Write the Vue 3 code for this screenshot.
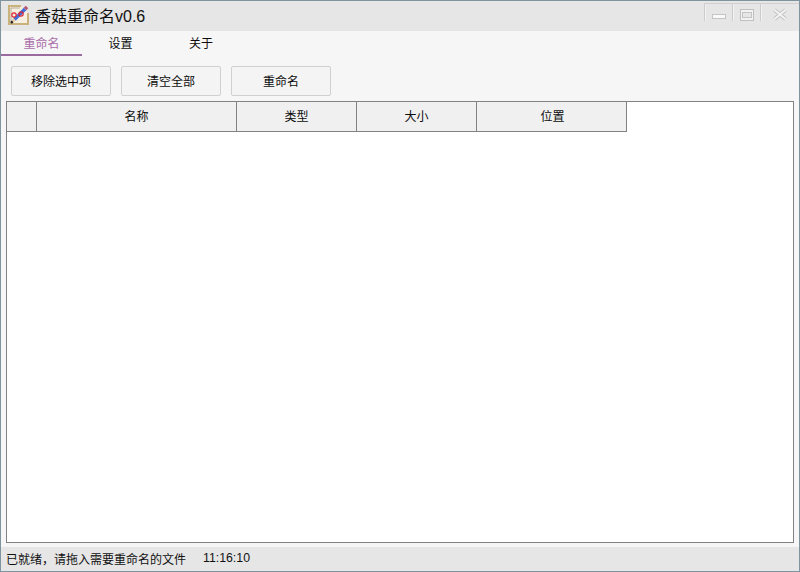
<script setup>
const tabs = [
  { label: '重命名', active: true },
  { label: '设置', active: false },
  { label: '关于', active: false }
]
const actions = ['移除选中项', '清空全部', '重命名']
const columns = [
  { label: '', cls: 'c0' },
  { label: '名称', cls: 'c1' },
  { label: '类型', cls: 'c2' },
  { label: '大小', cls: 'c3' },
  { label: '位置', cls: 'c4' }
]
</script>

<template>
  <div class="win">
    <header class="titlebar">
      <svg class="logo" width="24" height="24" viewBox="0 0 24 24">
        <path d="M14 2 H2 V20 H21 V9" fill="#f7efe0" stroke="#c9b27c" stroke-width="2" />
        <path d="M4 4 H13 M4 4 V18" fill="none" stroke="#a8a08c" stroke-width="0.8" />
        <path d="M7.5 15.5 L18 5" stroke="#3f6fd8" stroke-width="3.6" />
        <path d="M18 5 L20 3" stroke="#b4566e" stroke-width="3.6" />
        <path d="M7.5 15.5 L5.6 17.4" stroke="#e6c8a4" stroke-width="3" />
        <path d="M5.6 17.4 L4 19" stroke="#1c1c1c" stroke-width="2.4" />
        <circle cx="7" cy="11" r="2.2" fill="none" stroke="#e02434" stroke-width="1.2" />
        <circle cx="14" cy="10" r="2.2" fill="none" stroke="#e02434" stroke-width="1.2" />
      </svg>
      <span class="title">香菇重命名v0.6</span>
      <div class="controls">
        <div class="ctl c-min"><svg width="14" height="5" viewBox="0 0 14 5"><rect x="0.5" y="0.5" width="13" height="4" fill="#fafafa" stroke="#c4c4c4" /></svg></div>
        <div class="ctl c-max"><svg width="14" height="12" viewBox="0 0 14 12"><rect x="0.5" y="0.5" width="13" height="11" fill="#f2f2f2" stroke="#c0c0c0" /><rect x="2.5" y="3.5" width="9" height="5" fill="#e6e6e6" stroke="#c4c4c4" /></svg></div>
        <div class="ctl c-close"><svg width="16" height="13" viewBox="0 0 16 13"><path d="M2.5 2 L13.5 11 M13.5 2 L2.5 11" stroke="#c4c4c4" stroke-width="4" /><path d="M2.5 2 L13.5 11 M13.5 2 L2.5 11" stroke="#f4f4f4" stroke-width="1.8" /></svg></div>
      </div>
    </header>

    <nav class="tabs">
      <div v-for="t in tabs" :key="t.label" class="tab" :class="{ active: t.active }">{{ t.label }}</div>
    </nav>

    <div class="toolbar">
      <button v-for="a in actions" :key="a" class="btn" type="button">{{ a }}</button>
    </div>

    <section class="table">
      <div class="thead">
        <div v-for="c in columns" :key="c.cls" class="th" :class="c.cls">{{ c.label }}</div>
      </div>
    </section>

    <footer class="status">
      <span>已就绪，请拖入需要重命名的文件</span>
      <span class="time">11:16:10</span>
    </footer>
  </div>
</template>

<style>
html, body { margin: 0; padding: 0; background: #f6f6f6; }
</style>

<style scoped>
.win {
  width: 800px;
  height: 572px;
  box-sizing: border-box;
  border: 1px solid #7f949f;
  background: #f6f6f6;
  display: flex;
  flex-direction: column;
  font-family: "Liberation Sans", "Noto Sans CJK SC", sans-serif;
  font-size: 12px;
  color: #0c0c0c;
  overflow: hidden;
}
.titlebar {
  height: 30px;
  flex: none;
  background: #e6e6e6;
  display: flex;
  align-items: center;
  padding-left: 6px;
}
.logo { flex: none; }
.title {
  font-size: 16px;
  margin-left: 4px;
  margin-bottom: 2px;
  color: #111;
}
.controls {
  margin-left: auto;
  align-self: flex-start;
  display: flex;
  height: 18px;
  margin-top: 2px;
  border-top: 1px solid #d0d0d0;
}
.ctl {
  height: 17px;
  box-sizing: border-box;
  border-left: 1px solid #cccccc;
  box-shadow: inset 1px 0 0 #f2f2f2;
  display: flex;
  align-items: center;
  justify-content: center;
  padding-top: 4px;
}
.c-min { width: 28px; }
.c-min svg { margin-top: 4px; }
.c-max { width: 28px; }
.c-close { width: 39px; }
.tabs {
  height: 25px;
  flex: none;
  display: flex;
}
.tab {
  height: 25px;
  box-sizing: border-box;
  text-align: center;
  line-height: 27px;
  font-size: 12px;
}
.tab:first-child { width: 81px; }
.tab:nth-child(2) { width: 77px; }
.tab:nth-child(3) { width: 84px; }
.tab.active {
  color: #a86ba8;
  border-bottom: 2px solid #9b6a9f;
}
.toolbar {
  height: 45px;
  flex: none;
  display: flex;
  gap: 10px;
  padding-left: 10px;
  padding-top: 10px;
  box-sizing: border-box;
}
.btn {
  width: 100px;
  height: 30px;
  box-sizing: border-box;
  border: 1px solid #d0d0d0;
  border-radius: 2px;
  background: #f4f4f4;
  font: inherit;
  color: inherit;
  padding: 0 0 2px;
}
.table {
  flex: none;
  width: 788px;
  height: 442px;
  margin-left: 5px;
  box-sizing: border-box;
  border: 1px solid #828282;
  background: #fff;
}
.thead {
  display: flex;
  height: 30px;
  width: 620px;
  box-sizing: border-box;
  background: #f0f0f0;
  border-bottom: 1px solid #828282;
  border-right: 1px solid #828282;
}
.th {
  box-sizing: border-box;
  border-right: 1px solid #828282;
  text-align: center;
  line-height: 31px;
  height: 29px;
}
.th:last-child { border-right: 0; }
.c0 { width: 30px; }
.c1 { width: 200px; }
.c2 { width: 120px; }
.c3 { width: 120px; }
.c4 { width: 149px; padding-left: 2px; }
.status {
  flex: 1;
  margin-top: 4px;
  background: #e6e6e6;
  display: flex;
  align-items: center;
  padding-left: 5px;
  padding-bottom: 2px;
  font-size: 12px;
  color: #111;
}
.time { margin-left: 17px; font-size: 12.3px; }
</style>
